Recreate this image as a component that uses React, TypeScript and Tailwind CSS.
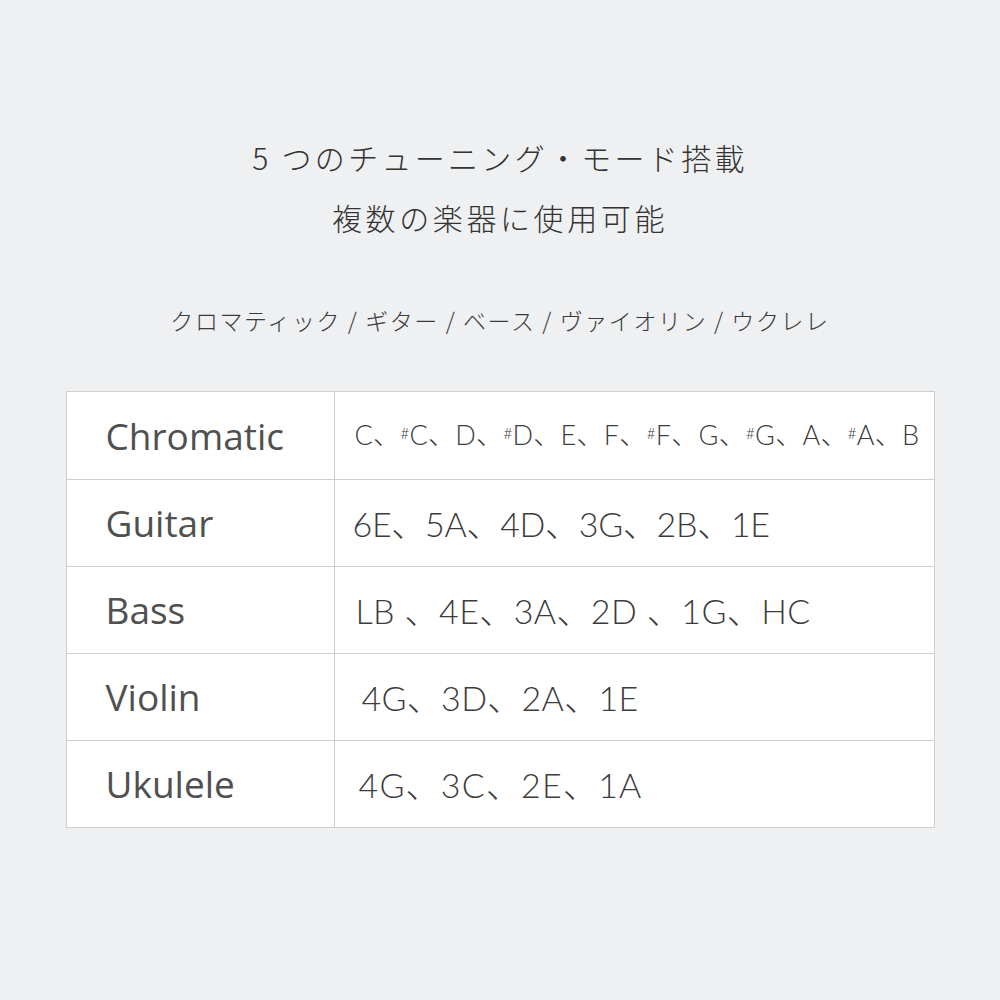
import React from "react";

const rows: { name: string; notes: React.ReactNode; cls: string }[] = [
  {
    name: "Chromatic",
    cls: "text-[27px] pl-[20px] tracking-[0.3px]",
    notes: (
      <>
        {["C", "#C", "D", "#D", "E", "F", "#F", "G", "#G", "A", "#A", "B"].map((n, i, arr) => (
          <span key={i}>
            {n.startsWith("#") ? (
              <>
                <sup className="-top-[6px] text-[15px]">#</sup>
                {n.slice(1)}
              </>
            ) : (
              n
            )}
            {i < arr.length - 1 ? "、" : ""}
          </span>
        ))}
      </>
    ),
  },
  { name: "Guitar", cls: "text-[34px] pl-[18px] tracking-[-0.3px]", notes: "6E、5A、4D、3G、2B、1E" },
  { name: "Bass", cls: "text-[34px] pl-[21px] tracking-[0.4px]", notes: "LB 、4E、3A、2D 、1G、HC" },
  { name: "Violin", cls: "text-[34px] pl-[27px] tracking-[0.3px]", notes: "4G、3D、2A、1E" },
  { name: "Ukulele", cls: "text-[34px] pl-[24px] tracking-[1.2px]", notes: "4G、3C、2E、1A" },
];

export default function App() {
  return (
    <div className="flex h-[1000px] w-[1000px] flex-col items-center bg-[#eff0f2] pt-[137px] font-['Noto_Sans_CJK_JP','Noto_Sans',sans-serif] text-[#333]">
      <h1 className="text-[30px] leading-[40px] font-light tracking-[3.3px]">5 つのチューニング・モード搭載</h1>
      <h2 className="mt-[20px] text-[30px] leading-[40px] font-light tracking-[3.6px]">複数の楽器に使用可能</h2>
      <p className="mt-[68px] text-[23px] leading-[30px] font-light tracking-[1.6px] text-[#3a3a3a]">
        クロマティック / ギター / ベース / ヴァイオリン / ウクレレ
      </p>
      <div className="mt-[56px] w-[869px] border-[1.5px] border-[#cfcfcf] bg-white">
        {rows.map((r, i) => (
          <div
            key={r.name}
            className={`grid h-[87px] grid-cols-[268px_1fr] ${i > 0 ? "border-t-[1.5px] border-[#cfcfcf]" : ""}`}
          >
            <div className="flex items-center border-r-[1.5px] border-[#cfcfcf] pl-[39px] font-['Open_Sans','Noto_Sans',sans-serif] text-[37px] font-medium text-[#505050]">
              {r.name}
            </div>
            <div className={`flex items-center font-['Lato','Noto_Sans_CJK_JP',sans-serif] font-light text-[#3c3c3c] ${r.cls}`}>
              <span>{r.notes}</span>
            </div>
          </div>
        ))}
      </div>
    </div>
  );
}
